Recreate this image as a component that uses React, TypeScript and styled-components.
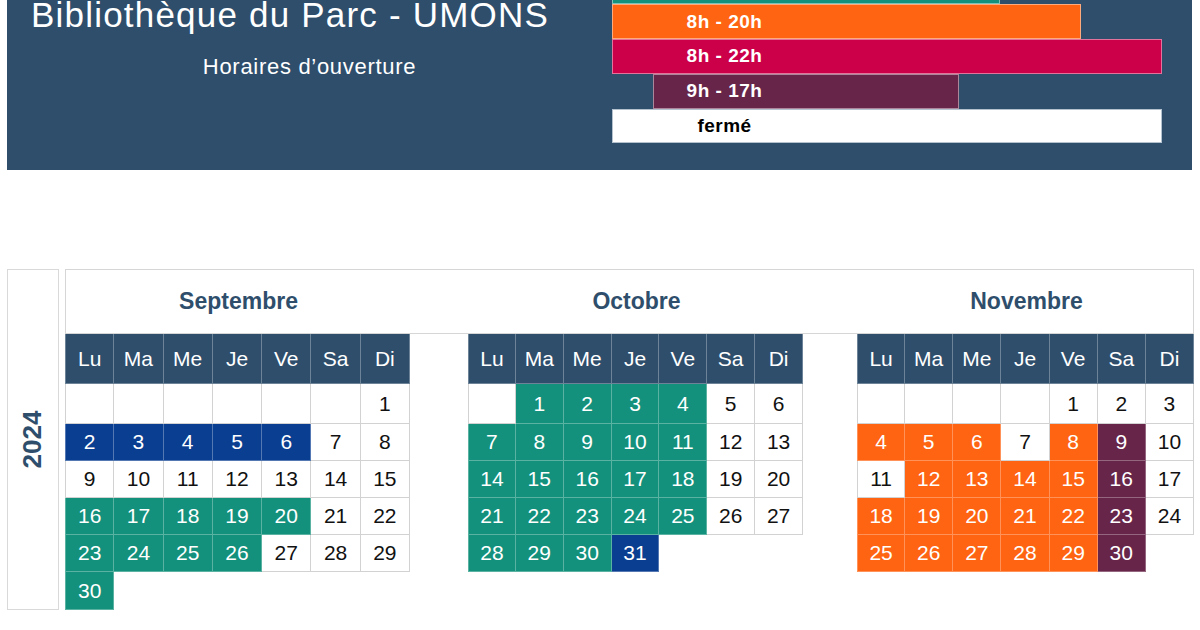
import styled, { createGlobalStyle } from 'styled-components'

const GlobalStyle = createGlobalStyle`
  html, body {
    margin: 0;
    padding: 0;
    background: #ffffff;
  }
  body {
    width: 1200px;
    height: 630px;
    overflow: hidden;
    font-family: 'Liberation Sans', Arial, sans-serif;
  }
`

const NAVY = '#2e4e6c'

type Kind = 'white' | 'blue' | 'teal' | 'orange' | 'plum'

const fills: Record<Kind, string> = {
  white: '#ffffff',
  blue: '#0a3e91',
  teal: '#13917c',
  orange: '#fe6411',
  plum: '#67254a',
}

interface Bar {
  label: string
  color: string
  left: number
  width: number
  dark?: boolean
}

// hour bars, widths in px on the legend's time axis (the first one is cut by the top edge)
const bars: Bar[] = [
  { label: '', color: fills.teal, left: 0, width: 388 },
  { label: '8h - 20h', color: fills.orange, left: 0, width: 469 },
  { label: '8h - 22h', color: '#cc0049', left: 0, width: 550 },
  { label: '9h - 17h', color: fills.plum, left: 41, width: 306 },
  { label: 'fermé', color: '#ffffff', left: 0, width: 550, dark: true },
]

interface Month {
  name: string
  offset: number
  days: number
  col: number
  kinds: Record<number, Kind>
}

function paint(spec: [Kind, number[]][]) {
  const out: Record<number, Kind> = {}
  spec.forEach(([kind, days]) => days.forEach((d) => (out[d] = kind)))
  return out
}

const range = (a: number, b: number) => Array.from({ length: b - a + 1 }, (_, i) => a + i)

const months: Month[] = [
  {
    name: 'Septembre',
    offset: 6,
    days: 30,
    col: 1,
    kinds: paint([
      ['blue', range(2, 6)],
      ['teal', [...range(16, 20), ...range(23, 26), 30]],
    ]),
  },
  {
    name: 'Octobre',
    offset: 1,
    days: 31,
    col: 3,
    kinds: paint([
      ['teal', [...range(1, 4), ...range(7, 11), ...range(14, 18), ...range(21, 25), ...range(28, 30)]],
      ['blue', [31]],
    ]),
  },
  {
    name: 'Novembre',
    offset: 4,
    days: 30,
    col: 5,
    kinds: paint([
      ['orange', [4, 5, 6, 8, ...range(12, 15), ...range(18, 22), ...range(25, 29)]],
      ['plum', [9, 16, 23, 30]],
    ]),
  },
]

const weekdays = ['Lu', 'Ma', 'Me', 'Je', 'Ve', 'Sa', 'Di']
const COLS = '345px 58px 335px 54px 337px'

const App = () => {
  return (
    <>
      <GlobalStyle />
      <Banner>
        <Intro>
          <Title>Bibliothèque du Parc - UMONS</Title>
          <Subtitle>Horaires d’ouverture</Subtitle>
        </Intro>
        <Legend>
          {bars.map((b, i) => (
            <LegendRow key={i}>
              <BarFill $color={b.color} $left={b.left} $width={b.width} $dark={b.dark} />
              {b.label && <BarLabel $dark={b.dark}>{b.label}</BarLabel>}
            </LegendRow>
          ))}
        </Legend>
      </Banner>

      <Calendar>
        <YearBox>
          <Year>2024</Year>
        </YearBox>
        <Main>
          <TitleBar>
            {months.map((m) => (
              <MonthTitle key={m.name} $col={m.col}>
                {m.name}
              </MonthTitle>
            ))}
          </TitleBar>
          <Tables>
            {months.map((m) => {
              const total = Math.ceil((m.offset + m.days) / 7) * 7
              return (
                <MonthGrid key={m.name} $col={m.col}>
                  {weekdays.map((w, i) => (
                    <HeadCell key={w} $first={i === 0}>
                      {w}
                    </HeadCell>
                  ))}
                  {Array.from({ length: total }, (_, i) => {
                    const day = i - m.offset + 1
                    const first = i % 7 === 0
                    if (day > m.days) return <Blank key={i} />
                    const kind: Kind = day >= 1 ? m.kinds[day] || 'white' : 'white'
                    return (
                      <DayCell key={i} $kind={kind} $first={first}>
                        {day >= 1 ? day : ''}
                      </DayCell>
                    )
                  })}
                </MonthGrid>
              )
            })}
          </Tables>
        </Main>
      </Calendar>
    </>
  )
}

const Banner = styled.header`
  display: flex;
  margin: 0 8px 0 7px;
  height: 170px;
  overflow: hidden;
  background: ${NAVY};
`

const Intro = styled.div`
  width: 605px;
  flex: none;
  display: flex;
  flex-direction: column;
  color: #ffffff;
`

const Title = styled.h1`
  margin: 0 0 0 24px;
  font-size: 35px;
  line-height: 30px;
  font-weight: 400;
  letter-spacing: 1.2px;
  white-space: nowrap;
`

const Subtitle = styled.p`
  margin: 26px 0 0;
  font-size: 22px;
  line-height: 22px;
  letter-spacing: 0.7px;
  text-align: center;
`

const Legend = styled.div`
  flex: 1;
  display: flex;
  flex-direction: column;
  margin-top: -30.5px;
`

const LegendRow = styled.div`
  display: grid;
  grid-template-columns: 225px 1fr;
  height: 34.75px;
`

const BarFill = styled.div<{ $color: string; $left: number; $width: number; $dark?: boolean }>`
  grid-row: 1;
  grid-column: 1 / -1;
  margin-left: ${(p) => p.$left}px;
  width: ${(p) => p.$width}px;
  box-sizing: border-box;
  background: ${(p) => p.$color};
  border: 1px solid ${(p) => (p.$dark ? '#b4c2d0' : 'rgba(255, 255, 255, 0.45)')};
`

const BarLabel = styled.span<{ $dark?: boolean }>`
  grid-row: 1;
  grid-column: 1;
  align-self: center;
  text-align: center;
  font-size: 19px;
  font-weight: 700;
  letter-spacing: 0.5px;
  color: ${(p) => (p.$dark ? '#000000' : '#ffffff')};
`

const Calendar = styled.section`
  display: flex;
  gap: 6px;
  margin-top: 99px;
  padding: 0 6px 0 7px;
`

const YearBox = styled.div`
  width: 52px;
  height: 341px;
  box-sizing: border-box;
  border: 1px solid #d9d9d9;
  display: flex;
  align-items: center;
  justify-content: center;
`

const Year = styled.span`
  display: inline-block;
  transform: rotate(-90deg);
  font-size: 26px;
  font-weight: 700;
  color: ${NAVY};
`

const Main = styled.div`
  width: 1129px;
  display: flex;
  flex-direction: column;
`

const TitleBar = styled.div`
  display: grid;
  grid-template-columns: ${COLS};
  height: 65px;
  box-sizing: border-box;
  border: 1px solid #d6d6d6;
`

const MonthTitle = styled.div<{ $col: number }>`
  grid-column: ${(p) => p.$col};
  display: flex;
  align-items: center;
  justify-content: center;
  font-size: 23px;
  font-weight: 700;
  color: ${NAVY};
`

const Tables = styled.div`
  display: grid;
  grid-template-columns: ${COLS};
  align-items: start;
`

const MonthGrid = styled.div<{ $col: number }>`
  grid-column: ${(p) => p.$col};
  display: grid;
  grid-template-columns: repeat(7, 1fr);
  grid-template-rows: 50px 40px repeat(4, 37px) 38px;
`

const HeadCell = styled.div<{ $first: boolean }>`
  display: flex;
  align-items: center;
  justify-content: center;
  box-sizing: border-box;
  background: ${NAVY};
  color: #ffffff;
  font-size: 21px;
  border-right: 1px solid rgba(255, 255, 255, 0.3);
  border-bottom: 1px solid rgba(255, 255, 255, 0.3);
  border-left: ${(p) => (p.$first ? '1px solid rgba(255, 255, 255, 0.3)' : 'none')};
`

const DayCell = styled.div<{ $kind: Kind; $first: boolean }>`
  display: flex;
  align-items: center;
  justify-content: center;
  box-sizing: border-box;
  font-size: 21px;
  background: ${(p) => fills[p.$kind]};
  color: ${(p) => (p.$kind === 'white' ? '#111111' : '#ffffff')};
  border-right: 1px solid ${(p) => (p.$kind === 'white' ? '#d2d2d2' : 'rgba(255, 255, 255, 0.3)')};
  border-bottom: 1px solid ${(p) => (p.$kind === 'white' ? '#d2d2d2' : 'rgba(255, 255, 255, 0.3)')};
  border-left: ${(p) =>
    p.$first ? `1px solid ${p.$kind === 'white' ? '#d2d2d2' : 'rgba(255, 255, 255, 0.3)'}` : 'none'};
`

const Blank = styled.div``

export default App
